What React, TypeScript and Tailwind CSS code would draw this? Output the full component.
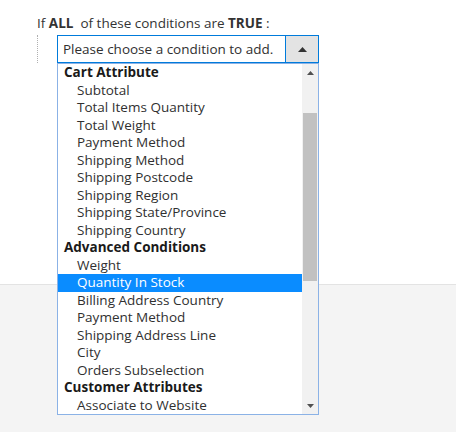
type Option = {
  label: string;
  group?: boolean;
  selected?: boolean;
};

const options: Option[] = [
  { label: "Cart Attribute", group: true },
  { label: "Subtotal" },
  { label: "Total Items Quantity" },
  { label: "Total Weight" },
  { label: "Payment Method" },
  { label: "Shipping Method" },
  { label: "Shipping Postcode" },
  { label: "Shipping Region" },
  { label: "Shipping State/Province" },
  { label: "Shipping Country" },
  { label: "Advanced Conditions", group: true },
  { label: "Weight" },
  { label: "Quantity In Stock", selected: true },
  { label: "Billing Address Country" },
  { label: "Payment Method" },
  { label: "Shipping Address Line" },
  { label: "City" },
  { label: "Orders Subselection" },
  { label: "Customer Attributes", group: true },
  { label: "Associate to Website" },
];

const Arrow = ({ up }: { up: boolean }) => (
  <svg width="9" height="5" viewBox="0 0 9 5">
    {up ? <path d="M0 5 L4.5 0 L9 5 Z" fill="#333" /> : <path d="M0 0 L4.5 5 L9 0 Z" fill="#333" />}
  </svg>
);

export default function App() {
  return (
    <div
      className="relative w-[456px] h-[432px] overflow-hidden bg-white text-[13.5px] text-[#303030]"
      style={{ fontFamily: '"Open Sans", "Liberation Sans", sans-serif' }}
    >
      <div className="h-[284px] bg-white pl-[37px] pt-[14px]">
        <div className="leading-[18px] text-[#333]">
          If <strong className="font-bold">ALL</strong>&nbsp; of these conditions are{" "}
          <strong className="font-bold">TRUE</strong> :
        </div>
        <div className="mt-[3px] h-[28px] border-l border-dotted border-[#b0b0b0] pl-[19px]">
          <div className="flex h-[28px] w-[262px] border border-[#007bdb] bg-white">
            <div className="flex-1 pl-[5px] leading-[26px]">Please choose a condition to add.</div>
            <div className="flex w-[33px] items-center justify-center border-l border-[#007bdb] bg-[#e3e3e3]">
              <Arrow up />
            </div>
          </div>
        </div>
      </div>
      <div className="h-[148px] border-t border-[#e3e3e3] bg-[#f4f4f4]" />

      <div className="absolute left-[57px] top-[63px] flex h-[352px] w-[262px] border border-[#8bb2e6] bg-white">
        <div className="flex-1">
          {options.map((o, i) => (
            <div
              key={i}
              className={
                "h-[17.5px] whitespace-nowrap leading-[17.5px] " +
                (o.group ? "pl-[6px] font-bold text-[#1a1a1a] " : "pl-[19px] ") +
                (o.selected ? "bg-[#0a8cff] text-white" : "")
              }
            >
              {o.label}
            </div>
          ))}
        </div>
        <div className="flex w-[16px] flex-col bg-[#f1f1f1]">
          <div className="flex h-[17px] items-center justify-center">
            <svg width="7" height="4" viewBox="0 0 7 4">
              <path d="M0 4 L3.5 0 L7 4 Z" fill="#505050" />
            </svg>
          </div>
          <div className="mt-[32px] mx-[1px] h-[168px] bg-[#c1c1c1]" />
          <div className="flex-1" />
          <div className="flex h-[17px] items-center justify-center">
            <svg width="7" height="4" viewBox="0 0 7 4">
              <path d="M0 0 L3.5 4 L7 0 Z" fill="#505050" />
            </svg>
          </div>
        </div>
      </div>
    </div>
  );
}
